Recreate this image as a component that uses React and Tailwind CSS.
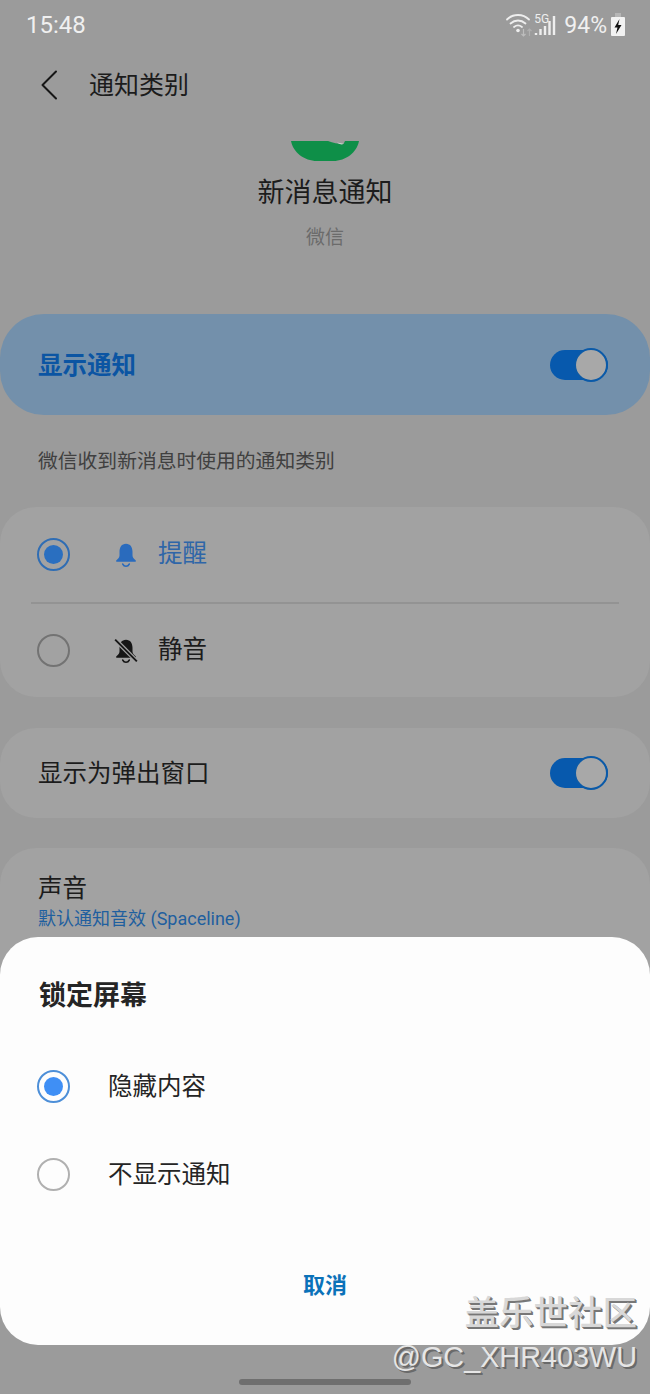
import React from 'react';

const font = { fontFamily: '"Roboto", "Noto Sans CJK SC", sans-serif' };

function Switch() {
  return (
    <div className="relative w-[58px] h-[30px] rounded-full bg-[#0759ad]">
      <div className="absolute right-0 top-[-2px] w-[34px] h-[34px] rounded-full bg-[#a8a8a8] border-2 border-[#0b5aa8]" />
    </div>
  );
}

function Radio({ on, dim }) {
  if (on) {
    return (
      <div className={`w-[33px] h-[33px] rounded-full border-2 flex items-center justify-center ${dim ? 'border-[#2f6db4]' : 'border-[#4d8fd8]'}`}>
        <div className={`w-[19px] h-[19px] rounded-full ${dim ? 'bg-[#2a6fc0]' : 'bg-[#3f8ff5]'}`} />
      </div>
    );
  }
  return <div className={`w-[33px] h-[33px] rounded-full border-2 ${dim ? 'border-[#737373]' : 'border-[#b0b0b0]'}`} />;
}

function Bell({ color, off }) {
  return (
    <svg width="24" height="26" viewBox="0 0 22 24" fill="none">
      <path d="M11 1.500C7 1.500 5 4.800 5 9v3.500c0 1.800-1.200 3-2.600 4-.9.6-.6 1.700.5 1.700h16.200c1.100 0 1.400-1.100.5-1.700-1.400-1-2.600-2.200-2.600-4V9c0-4.200-2-7.500-6-7.500z" fill={color} />
      <path d="M8 20.400c.6 1.300 1.700 2 3 2s2.400-.7 3-2" stroke={color} strokeWidth="1.500" strokeLinecap="round" />
      {off && <path d="M1 1.500 21 21.500" stroke="#a2a2a2" strokeWidth="4" />}
      {off && <path d="M1 1.500 21 21.500" stroke={color} strokeWidth="1.700" />}
    </svg>
  );
}

function StatusIcons() {
  return (
    <div className="flex items-center">
      <svg width="28" height="26" viewBox="0 0 28 26" fill="none">
        <path d="M1 7.500C7 1.500 17 1.500 23 7.500" stroke="#eeeeee" strokeWidth="1.800" strokeLinecap="round" />
        <path d="M4.500 11.500C9 7.500 15 7.500 19.500 11.500" stroke="#eeeeee" strokeWidth="1.800" strokeLinecap="round" />
        <path d="M8 15C10.500 13 13.500 13 16 15" stroke="#eeeeee" strokeWidth="1.800" strokeLinecap="round" />
        <circle cx="12" cy="18.500" r="1.800" fill="#eeeeee" />
        <path d="M17.500 17v7M15.500 22l2 2 2-2" stroke="#bdbdbd" strokeWidth="1.200" />
        <path d="M23.500 24v-7M21.500 19l2-2 2 2" stroke="#b0b0b0" strokeWidth="1.200" />
      </svg>
      <div className="relative w-[24px] h-[26px]">
        <span className="absolute left-0 top-[1px] text-[12px] leading-[13px] text-[#eeeeee]">5G</span>
        <svg width="24" height="26" viewBox="0 0 24 26" className="absolute left-0 top-0">
          <path d="M2 23v-2M6.500 23v-6M11 23v-9M15.500 23V9M20 23V4" stroke="#eeeeee" strokeWidth="2.400" />
        </svg>
      </div>
      <span className="ml-[6px] pt-[2px] text-[23px] leading-[26px] text-[#f0f0f0]">94%</span>
      <svg width="16" height="24" viewBox="0 0 16 24" className="ml-[3px]">
        <rect x="5" y="0" width="6" height="4" fill="#b5b5b5" />
        <rect x="1" y="4" width="14" height="19" rx="1" fill="#f2f2f2" />
        <path d="M9.500 6 4.500 14.500h3L6 21 11.500 12H8.200z" fill="#111111" />
      </svg>
    </div>
  );
}

export default function App() {
  return (
    <div className="relative w-[650px] h-[1394px] overflow-hidden bg-[#9b9b9b]" style={font}>
      {/* dimmed settings page */}
      <div className="flex items-center justify-between pl-[26px] pr-[24px] h-[49px]">
        <span className="text-[24px] leading-[28px] text-[#f0f0f0]">15:48</span>
        <StatusIcons />
      </div>

      <div className="flex items-center h-[72px] pl-[40px]">
        <svg width="18" height="30" viewBox="0 0 18 30" fill="none">
          <path d="M16 1.500 2.500 15 16 28.500" stroke="#161616" strokeWidth="2" strokeLinecap="round" strokeLinejoin="round" />
        </svg>
        <span className="ml-[31px] pt-[2px] text-[25px] leading-[32px] text-[#1c1c1c]">通知类别</span>
      </div>

      <div className="mt-[20px] flex flex-col items-center">
        {/* app icon, cut off by the scroll edge */}
        <svg width="68" height="20" viewBox="0 0 68 20">
          <path d="M0 0H68C66 11 55 20 42 20H26C13 20 2 11 0 0Z" fill="#0e8f48" />
          <path d="M37 0H54L52.500 3C47 3 42 2 37 0Z" fill="#9b9b9b" />
          <path d="M46 1.500 52.500 2.800 51 3.500C49 3.300 47.500 2.600 46 1.500Z" fill="#d5dbd7" />
        </svg>
        <div className="mt-[15px] text-[27px] leading-[34px] text-[#1c1c1c]">新消息通知</div>
        <div className="mt-[15px] text-[19px] leading-[26px] text-[#6b6b6b]">微信</div>
      </div>

      <div className="mt-[63px] h-[101px] rounded-[44px] bg-[#7390ab] flex items-center justify-between pl-[38px] pr-[42px]">
        <span className="pt-[4px] text-[24.500px] font-bold text-[#0b55a3]">显示通知</span>
        <Switch />
      </div>

      <div className="mt-[34px] pl-[38px] text-[19.800px] leading-[26px] text-[#404040]">微信收到新消息时使用的通知类别</div>

      <div className="mt-[32px] h-[190px] rounded-[36px] bg-[#a2a2a2] flex flex-col">
        <div className="h-[95px] flex items-center pl-[37px]">
          <Radio on dim />
          <div className="ml-[44px] w-[24px] flex"><Bell color="#2a6bbd" /></div>
          <span className="ml-[20px] text-[24.500px] text-[#2f66a8]">提醒</span>
        </div>
        <div className="mx-[31px] h-[2px] bg-[#939393]" />
        <div className="h-[93px] flex items-center pl-[37px]">
          <Radio dim />
          <div className="ml-[44px] w-[24px] flex"><Bell color="#161616" off /></div>
          <span className="ml-[20px] text-[24.500px] text-[#1c1c1c]">静音</span>
        </div>
      </div>

      <div className="mt-[31px] h-[90px] rounded-[36px] bg-[#a2a2a2] flex items-center justify-between pl-[38px] pr-[42px]">
        <span className="pt-[2px] text-[24.500px] text-[#1c1c1c]">显示为弹出窗口</span>
        <Switch />
      </div>

      <div className="mt-[30px] h-[200px] rounded-[36px] bg-[#a2a2a2] pl-[38px] pt-[25px]">
        <div className="text-[24.500px] leading-[32px] text-[#1c1c1c]">声音</div>
        <div className="mt-[2px] text-[18px] leading-[24px] text-[#1f5f9f]">默认通知音效 (Spaceline)</div>
      </div>

      {/* bottom sheet */}
      <div className="absolute left-0 right-0 top-[937px] h-[408px] rounded-[38px] bg-[#fdfdfd] flex flex-col">
        <div className="pl-[39px] pt-[41px] text-[27px] leading-[36px] font-bold text-[#252525]">锁定屏幕</div>
        <div className="mt-[28px] h-[88px] flex items-center pl-[37px]">
          <Radio on />
          <span className="ml-[38px] pt-[2px] text-[24.500px] text-[#252525]">隐藏内容</span>
        </div>
        <div className="h-[88px] flex items-center pl-[37px]">
          <Radio />
          <span className="ml-[38px] pt-[2px] text-[24.500px] text-[#252525]">不显示通知</span>
        </div>
        <div className="mt-[53px] text-center text-[22px] leading-[30px] font-bold text-[#0b72b9]">取消</div>
      </div>

      {/* home bar */}
      <div className="absolute left-[239px] top-[1379px] w-[172px] h-[6px] rounded-full bg-[#6f6f6f]" />

      {/* watermark */}
      <div className="absolute right-[13px] top-[1293px] text-[34.500px] leading-[40px] font-medium text-[#d8d8d8] [text-shadow:1px_1px_0_#777,2px_2px_0_#777]">盖乐世社区</div>
      <div className="absolute right-[13px] top-[1341px] text-[28.800px] leading-[32px] text-[#e6e6e6] [text-shadow:1px_1px_0_#6a6a6a,2px_2px_0_#6a6a6a]" style={{ fontFamily: '"Liberation Sans", sans-serif' }}>@GC_XHR403WU</div>
    </div>
  );
}
